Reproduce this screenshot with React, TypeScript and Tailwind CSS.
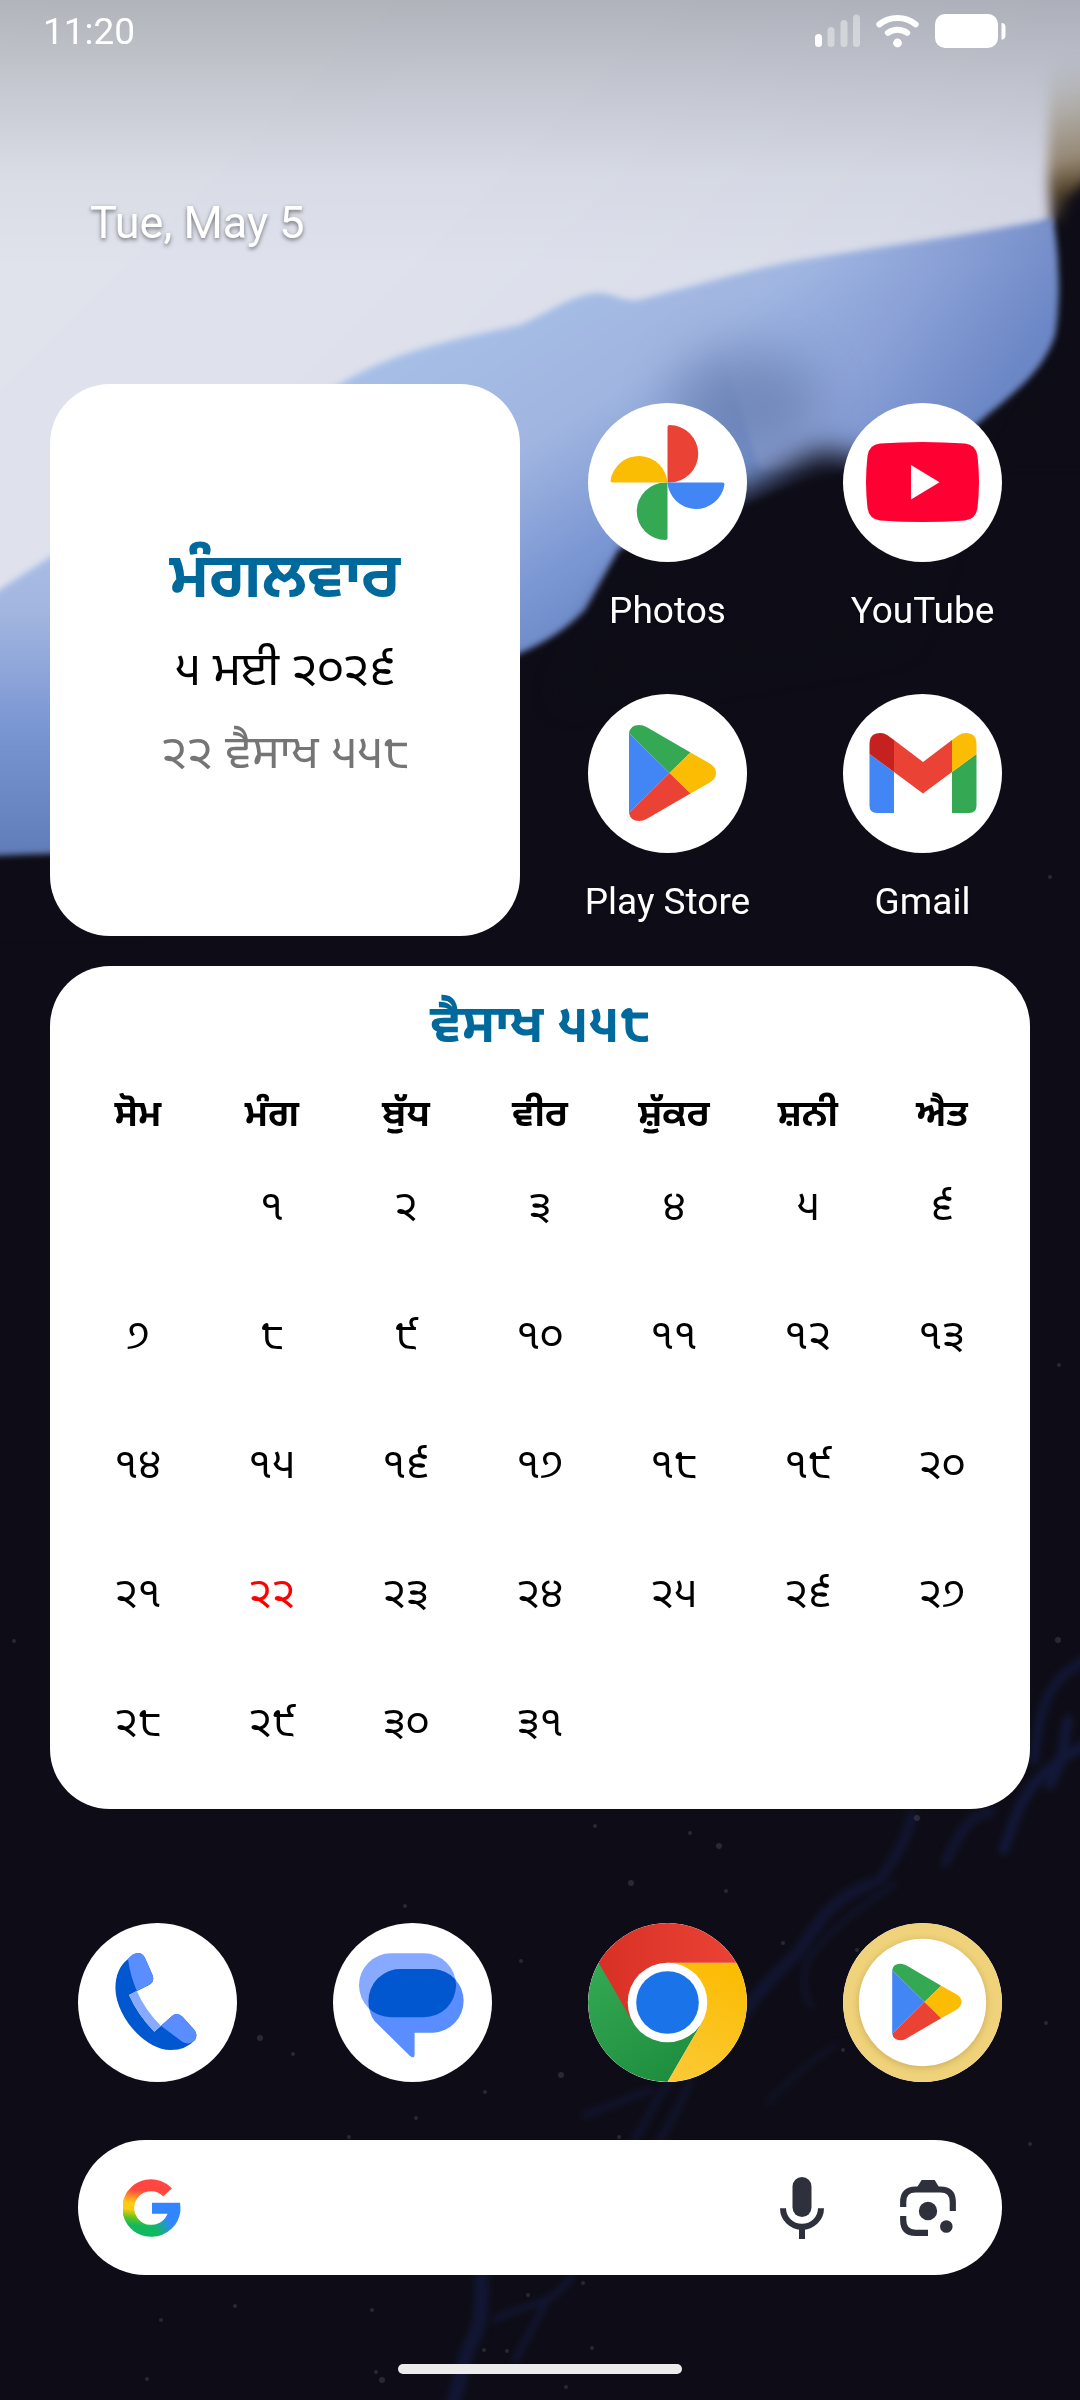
import React from 'react';

const weekdays = ['ਸੋਮ', 'ਮੰਗ', 'ਬੁੱਧ', 'ਵੀਰ', 'ਸ਼ੁੱਕਰ', 'ਸ਼ਨੀ', 'ਐਤ'];

const weeks = [
  ['', '੧', '੨', '੩', '੪', '੫', '੬'],
  ['੭', '੮', '੯', '੧੦', '੧੧', '੧੨', '੧੩'],
  ['੧੪', '੧੫', '੧੬', '੧੭', '੧੮', '੧੯', '੨੦'],
  ['੨੧', '੨੨', '੨੩', '੨੪', '੨੫', '੨੬', '੨੭'],
  ['੨੮', '੨੯', '੩੦', '੩੧', '', '', ''],
];

const today = '੨੨';

// [x, y, radius]
const stars = [
  [1058, 1640, 3], [917, 1818, 3], [595, 1826, 2], [719, 1846, 3], [690, 1833, 2], [631, 1883, 3],
  [726, 1891, 2], [783, 1943, 2], [857, 1950, 2], [843, 2050, 2], [561, 2075, 3], [260, 2038, 3],
  [293, 2054, 2], [405, 1906, 2], [521, 1961, 2], [485, 2092, 2], [349, 2137, 2], [416, 2118, 2],
  [619, 2137, 2], [583, 2283, 2], [528, 2295, 2], [235, 2306, 2], [161, 2320, 2], [484, 2350, 2],
  [507, 2351, 2], [376, 2372, 2], [382, 2380, 3], [147, 2379, 2], [592, 2348, 2], [1046, 2023, 2],
  [1059, 1365, 2], [1050, 877, 2], [566, 2387, 2], [1030, 2144, 2], [372, 2310, 2], [14, 1641, 2],
];

const Wallpaper: React.FC = () => (
  <svg className="absolute inset-0 h-full w-full" viewBox="0 0 1080 2400" preserveAspectRatio="none" colorInterpolationFilters="sRGB" aria-hidden="true">
    <defs>
      <linearGradient id="paper" x1="0" y1="0" x2="1" y2="0.6">
        <stop offset="0" stopColor="#e1e4ec" />
        <stop offset="0.45" stopColor="#dfe2ed" />
        <stop offset="0.75" stopColor="#dadeea" />
        <stop offset="1" stopColor="#d3d2e2" />
      </linearGradient>
      <linearGradient id="petal" gradientUnits="userSpaceOnUse" x1="420" y1="300" x2="640" y2="640">
        <stop offset="0" stopColor="#a8c1e8" />
        <stop offset="0.45" stopColor="#a0b5e0" />
        <stop offset="0.75" stopColor="#7a96d3" />
        <stop offset="1" stopColor="#6581bf" />
      </linearGradient>
      <linearGradient id="petalRight" gradientUnits="userSpaceOnUse" x1="760" y1="260" x2="980" y2="420">
        <stop offset="0" stopColor="#a4bbe6" stopOpacity="0" />
        <stop offset="0.5" stopColor="#8da3d8" />
        <stop offset="1" stopColor="#6c87c6" />
      </linearGradient>
      <linearGradient id="petalLeft" x1="0" y1="0" x2="0" y2="1">
        <stop offset="0" stopColor="#abc0e6" />
        <stop offset="0.3" stopColor="#a3b6e0" />
        <stop offset="0.65" stopColor="#7895d2" />
        <stop offset="1" stopColor="#607cb9" />
      </linearGradient>
      <linearGradient id="edge" gradientUnits="userSpaceOnUse" x1="1050" y1="60" x2="1080" y2="225">
        <stop offset="0" stopColor="#cfcfd4" stopOpacity="0" />
        <stop offset="0.3" stopColor="#c2bfba" />
        <stop offset="0.6" stopColor="#9d8f7a" />
        <stop offset="0.78" stopColor="#57472f" />
        <stop offset="1" stopColor="#0e0d17" />
      </linearGradient>
      <linearGradient id="scrim" x1="0" y1="0" x2="0" y2="1">
        <stop offset="0" stopColor="#000" stopOpacity="0.21" />
        <stop offset="0.35" stopColor="#000" stopOpacity="0.11" />
        <stop offset="0.65" stopColor="#000" stopOpacity="0.03" />
        <stop offset="1" stopColor="#000" stopOpacity="0" />
      </linearGradient>
      <filter id="blur3" x="-20%" y="-20%" width="140%" height="140%"><feGaussianBlur stdDeviation="3" /></filter>
      <filter id="blur6" x="-50%" y="-50%" width="200%" height="200%"><feGaussianBlur stdDeviation="6" /></filter>
      <filter id="blur14" x="-50%" y="-50%" width="200%" height="200%"><feGaussianBlur stdDeviation="14" /></filter>
      <filter id="blur26" x="-100%" y="-100%" width="300%" height="300%"><feGaussianBlur stdDeviation="26" /></filter>
    </defs>

    <rect width="1080" height="2400" fill="#0e0d17" />

    <g filter="url(#blur3)">
      <path d="M-20 -20H1100V190L1053 222L900 300L600 400L300 600L-20 640Z" fill="url(#paper)" />
    </g>
    <path d="M1050 60H1110V430H1062C1056 330 1056 260 1048 180Z" fill="url(#edge)" filter="url(#blur6)" />
    <path d="M1066 200L1100 170V460H1000L1056 360Z" fill="#0e0d17" filter="url(#blur6)" />

    <g filter="url(#blur3)">
      <path d="M-20 602C20 578 60 548 140 505C220 455 290 412 340 384C390 352 460 338 520 325C550 312 570 296 596 293C612 292 622 302 638 300C700 285 740 272 790 262C880 246 970 236 1053 218C1060 260 1060 310 1055 335C1042 375 1010 395 972 428C900 470 820 470 760 500L619 549L585 610C560 635 540 645 500 662L400 740L200 830C120 856 60 852 -20 856Z" fill="url(#petal)" />
      <path d="M700 281C820 255 940 242 1053 218C1060 260 1060 310 1055 335C1042 375 1010 395 972 428C900 470 820 470 760 470Z" fill="url(#petalRight)" />
      <path d="M-20 602C20 578 60 548 140 505V840C80 856 40 850 -20 856Z" fill="url(#petalLeft)" />
    </g>

    <ellipse cx="745" cy="405" rx="75" ry="55" fill="#4c5f8e" opacity="0.4" filter="url(#blur26)" />
    <path d="M625 580L700 510L760 482L820 450L860 458L960 480L900 640L560 700L590 640Z" fill="#0e0d17" filter="url(#blur14)" />
    <path d="M-20 872C40 864 80 866 140 852V930H-20Z" fill="#0e0d17" filter="url(#blur6)" />

    <g fill="none" stroke="#16204f" strokeLinecap="round" filter="url(#blur3)">
      <path d="M1085 1660C1050 1680 1040 1700 1034 1760" strokeWidth="10" opacity="0.5" />
      <path d="M1068 1720C1062 1750 1064 1760 1050 1785M1085 1745C1030 1775 1020 1800 1004 1850" strokeWidth="10" opacity="0.6" />
      <path d="M990 1812C960 1818 955 1850 945 1862M912 1816C906 1840 900 1850 880 1880" strokeWidth="10" opacity="0.45" />
      <path d="M870 1884C830 1900 820 1920 800 1950C780 1972 755 1990 735 2030" strokeWidth="12" opacity="0.45" />
      <path d="M895 1884C855 1910 830 1930 808 1960C800 1985 805 2000 812 2006" strokeWidth="4" opacity="0.5" />
      <path d="M835 2045C810 2062 795 2075 768 2102" strokeWidth="4" opacity="0.4" />
      <path d="M670 2080C650 2110 640 2130 630 2150M690 2080C680 2110 665 2130 655 2150M650 2090L585 2115" strokeWidth="6" opacity="0.45" />
      <path d="M482 2270C480 2300 485 2320 470 2345C460 2370 460 2390 450 2410" strokeWidth="14" opacity="0.5" />
      <path d="M572 2275C550 2310 530 2300 495 2320M545 2305L515 2360" strokeWidth="5" opacity="0.6" />
    </g>

    <g fill="#8d8d9a" opacity="0.22">
      {stars.map(([x, y, r]) => (
        <circle key={`${x}-${y}`} cx={x} cy={y} r={r} />
      ))}
    </g>
    <rect width="1080" height="270" fill="url(#scrim)" />
  </svg>
);

const StatusBar: React.FC = () => (
  <header className="flex h-[62px] items-center justify-between pr-[74px] pl-[43px]">
    <span className="text-[37px] leading-none">11:20</span>
    <div className="flex items-center gap-4">
      <svg width="45" height="34" viewBox="0 0 45 34" fill="#fff" aria-hidden="true">
        <rect x="0" y="20" width="7" height="13" rx="3.5" />
        <rect x="12.5" y="13" width="7" height="20" rx="3.5" opacity="0.4" />
        <rect x="25.5" y="6" width="7" height="27" rx="3.5" opacity="0.4" />
        <rect x="38" y="0.5" width="7" height="32.5" rx="3.5" opacity="0.4" />
      </svg>
      <svg width="43" height="34" viewBox="0 0 43 34" fill="none" stroke="#fff" strokeLinecap="round" aria-hidden="true">
        <path d="M3.3 10.4C13.5 1.8 29.5 1.8 39.7 10.4" strokeWidth="6" />
        <path d="M11.8 18.8C17.5 14.6 25.5 14.6 31.2 18.8" strokeWidth="6" />
        <circle cx="21.5" cy="29" r="4.4" fill="#fff" stroke="none" />
      </svg>
      <svg width="71" height="34" viewBox="0 0 71 34" fill="#fff" aria-hidden="true">
        <rect width="63" height="34" rx="10" />
        <path d="M66.500 9C69.500 9 70.500 11 70.500 13V21C70.500 23.500 69.500 25.500 66.500 25.500Z" />
      </svg>
    </div>
  </header>
);

const PhotosIcon = () => (
  <svg viewBox="0 0 159 159" aria-hidden="true">
    <path d="M79.500 79.500V24Q79.500 22 81.500 22A28.700 28.700 0 0 1 81.500 79.500Z" fill="#ea4335" />
    <path d="M79.500 79.500H134.500Q136.500 79.500 136.500 81.500A28.700 28.700 0 0 1 79.500 79.500Z" fill="#4285f4" />
    <path d="M79.500 79.500V135Q79.500 137 77.500 137A28.700 28.700 0 0 1 77.500 79.500Z" fill="#34a853" />
    <path d="M79.500 79.500H24.500Q22.500 79.500 22.500 77.500A28.700 28.700 0 0 1 79.500 79.500Z" fill="#fbbc04" />
  </svg>
);

const YouTubeIcon = () => (
  <svg viewBox="0 0 159 159" aria-hidden="true">
    <path d="M37 40.500Q79.500 37.500 122 40.500Q133 41.500 134.500 53Q137.500 79 134.500 105Q133 116 122 117.500Q79.500 120.500 37 117.500Q26 116 24.500 105Q21.500 79 24.500 53Q26 41.500 37 40.500Z" fill="#ff0033" />
    <path d="M68 62L96.500 79.200L68 96.500Z" fill="#fff" />
  </svg>
);

const PlayShape = () => (
  <>
    <path d="M41 39V119L81.500 79Z" fill="#4285f4" />
    <path d="M41 39Q42.500 31 51 31Q55 31 58.500 33L102.500 58.600L81.500 79Z" fill="#34a853" />
    <path d="M102.500 58.600L121 69Q128 73 128 79Q128 85 121 89L102.500 99.500L81.500 79Z" fill="#fbbc04" />
    <path d="M41 119Q42.500 127 51 127Q55 127 58.500 125L102.500 99.500L81.500 79Z" fill="#ea4335" />
  </>
);

const PlayIcon = () => (
  <svg viewBox="0 0 159 159" aria-hidden="true">
    <PlayShape />
  </svg>
);

const GmailIcon = () => (
  <svg viewBox="0 0 159 159" aria-hidden="true">
    <path d="M26.500 60L51 78V119H34Q26.500 119 26.500 111.500Z" fill="#4285f4" />
    <path d="M133.500 60L109 78V119H126Q133.500 119 133.500 111.500Z" fill="#34a853" />
    <path d="M51 46L80 68L109 46V78L80 99.500L51 78Z" fill="#ea4335" />
    <path d="M26.500 60V50Q26.500 39 37.500 39Q41 39 44.500 41.200L51 46V78Z" fill="#c5221f" />
    <path d="M133.500 60V50Q133.500 39 122.500 39Q119 39 115.500 41.200L109 46V78Z" fill="#fbbc04" />
  </svg>
);

const PhoneIcon = () => (
  <svg viewBox="0 0 159 159" aria-hidden="true">
    <path d="M60 30Q64.500 30 67 35L74.500 52Q77 59 71 62L51 72Q60 92 76.300 108.700L94 93Q99 88.500 104.500 93.700L116.500 107Q120 112 117 117Q108 127 92.500 127C66 127 37.400 92 37.400 65Q37.400 46 50 36Q55 30 60 30Z" fill="#0057cf" />
    <path d="M50 36Q55 30 60 30Q64.500 30 67 35L74.500 52Q77 59 71 62L58.700 67.700Q52 52 50 36Z" fill="#5a8dff" />
    <path d="M82.800 102.700L94 93Q99 88.500 104.500 93.700L116.500 107Q120 112 117 117Q111 123 104 118.500Z" fill="#5a8dff" />
    <path d="M58.700 67.700L51 72Q60 92 76.300 108.700L82.800 102.700Q67 87 58.700 67.700Z" fill="#87a9ff" />
  </svg>
);

const MessagesIcon = () => (
  <svg viewBox="0 0 159 159" aria-hidden="true">
    <defs>
      <clipPath id="frontBubble"><rect x="26" y="30.300" width="97" height="64" rx="32" /></clipPath>
    </defs>
    <rect x="26" y="30.300" width="97" height="64" rx="32" fill="#87a9ff" />
    <path d="M67.500 46H100.500A31.900 31.900 0 0 1 100.500 109.700H81.600V131.500Q81.600 136 77 133L41.500 98Q35.500 90 35.500 78A32 32 0 0 1 67.500 46Z" fill="#5a8dff" />
    <path d="M67.500 46H100.500A31.900 31.900 0 0 1 100.500 109.700H50L41.500 98Q35.500 90 35.500 78A32 32 0 0 1 67.500 46Z" fill="#0057cf" clipPath="url(#frontBubble)" />
  </svg>
);

const ChromeIcon = () => (
  <svg viewBox="0 0 159 159" aria-hidden="true">
    <defs>
      <linearGradient id="chromeRed" x1="0" x2="1"><stop offset="0" stopColor="#d93025" /><stop offset="1" stopColor="#ea4335" /></linearGradient>
      <linearGradient id="chromeYellow" x1="0.3" y1="1" x2="0.6" y2="0"><stop offset="0" stopColor="#fcc934" /><stop offset="1" stopColor="#fbbc04" /></linearGradient>
      <linearGradient id="chromeGreen" x1="0.7" y1="1" x2="0.1" y2="0"><stop offset="0" stopColor="#1e8e3e" /><stop offset="1" stopColor="#34a853" /></linearGradient>
    </defs>
    <path d="M79.500 159A79.500 79.500 0 0 1 10.700 39.700L79.500 79.500L114 99.400Z" fill="url(#chromeGreen)" />
    <path d="M148.300 39.700A79.500 79.500 0 0 1 79.500 159L114 99.400L79.500 39.700Z" fill="url(#chromeYellow)" />
    <path d="M10.700 39.700A79.500 79.500 0 0 1 148.300 39.700H79.500L45 99.400Z" fill="url(#chromeRed)" />
    <circle cx="79.500" cy="79.500" r="39.800" fill="#fff" />
    <circle cx="79.500" cy="79.500" r="31.300" fill="#1a73e8" />
  </svg>
);

const SuggestedPlayIcon = () => (
  <svg viewBox="0 0 159 159" aria-hidden="true">
    <defs>
      <filter id="soft"><feGaussianBlur stdDeviation="3" /></filter>
    </defs>
    <circle cx="79.500" cy="79.500" r="79.500" fill="#efd27a" />
    <circle cx="79.500" cy="81" r="64.500" fill="#8a6d20" opacity="0.3" filter="url(#soft)" />
    <circle cx="79.500" cy="79.500" r="63.700" fill="#fff" />
    <g transform="translate(16.500 16) scale(0.797)">
      <PlayShape />
    </g>
  </svg>
);

const GoogleIcon = () => (
  <svg width="58" height="58" viewBox="0 0 58 58" fill="none" aria-hidden="true">
    <defs>
      <linearGradient id="gLeft" gradientUnits="userSpaceOnUse" x1="34" y1="6" x2="28" y2="54">
        <stop offset="0.15" stopColor="#ff4641" />
        <stop offset="0.42" stopColor="#ffc814" />
        <stop offset="0.56" stopColor="#fbcc0e" />
        <stop offset="0.74" stopColor="#5fc321" />
        <stop offset="0.88" stopColor="#10b95f" />
      </linearGradient>
      <linearGradient id="gRight" gradientUnits="userSpaceOnUse" x1="29" y1="52" x2="50" y2="38">
        <stop offset="0.15" stopColor="#10b95f" />
        <stop offset="0.8" stopColor="#3186ff" />
      </linearGradient>
    </defs>
    <path d="M44.600 13.400A22.800 22.800 0 1 0 29.500 51.800" stroke="url(#gLeft)" strokeWidth="12" />
    <path d="M29 51.800A22.800 22.800 0 0 0 51.400 31" stroke="url(#gRight)" strokeWidth="12" />
    <path d="M29 23.700H57Q58 29 57 34.800H29Z" fill="#3186ff" />
  </svg>
);

const MicIcon = () => (
  <svg width="44" height="62" viewBox="0 0 44 62" fill="none" stroke="#2e313b" strokeWidth="6" aria-hidden="true">
    <rect x="12.500" y="0" width="19" height="40" rx="9.500" fill="#2e313b" stroke="none" />
    <path d="M3 31.300A19 18.500 0 0 0 41 31.300" />
    <path d="M22 50V62" />
  </svg>
);

const LensIcon = () => (
  <svg width="56" height="56" viewBox="0 0 56 56" fill="none" stroke="#2e313b" strokeWidth="6.200" aria-hidden="true">
    <path d="M3.200 27V22Q3.200 9.500 15.500 9.500H40.500Q52.800 9.500 52.800 22V31" />
    <path d="M3.200 36V40Q3.200 52.800 15.500 52.800H28" />
    <path d="M16.500 8L21.700 0H34.700L39.500 8Z" fill="#2e313b" stroke="none" />
    <circle cx="28" cy="31" r="9.200" fill="#2e313b" stroke="none" />
    <circle cx="46.300" cy="46.500" r="6.300" fill="#2e313b" stroke="none" />
  </svg>
);

const AppIcon: React.FC<{ label?: string; name?: string; children: React.ReactNode }> = ({ label, name, children }) => (
  <button type="button" aria-label={name} className="flex flex-col items-center">
    <span className="block size-[159px] overflow-hidden rounded-full bg-white">{children}</span>
    {label && <span className="mt-[25px] text-[37px] leading-[48px] whitespace-nowrap text-shadow-[0_1px_3px_rgb(0_0_0/0.4)]">{label}</span>}
  </button>
);

const DateWidget: React.FC = () => (
  <section className="mx-5 flex h-[552px] flex-col items-center justify-center rounded-[60px] bg-white pt-[10px] font-['Noto_Sans_Gurmukhi','Noto_Sans',sans-serif]">
    <h1 className="text-[63px] leading-[100px] font-bold text-[#00699c]">ਮੰਗਲਵਾਰ</h1>
    <p className="text-[47px] leading-[83px] text-black">੫ ਮਈ ੨੦੨੬</p>
    <p className="text-[47px] leading-[83px] text-[#757575]">੨੨ ਵੈਸਾਖ ੫੫੮</p>
  </section>
);

const CalendarWidget: React.FC = () => (
  <section className="mx-[50px] mt-[30px] rounded-[60px] bg-white px-[21px] pt-6 font-['Noto_Sans_Gurmukhi','Noto_Sans',sans-serif] text-black">
    <table className="w-full table-fixed text-center">
      <caption className="h-20 text-[53px] leading-[80px] font-bold text-[#00699c]">ਵੈਸਾਖ ੫੫੮</caption>
      <thead>
        <tr className="h-[94px]">
          {weekdays.map((day) => (
            <th key={day} scope="col" className="p-0 text-[37px] leading-[56px] font-bold">{day}</th>
          ))}
        </tr>
      </thead>
      <tbody>
        {weeks.map((week, i) => (
          <tr key={i} className="h-[129px]">
            {week.map((day, j) => (
              <td key={j} className={`p-0 pt-[14px] align-top text-[42px] leading-[64px] ${day === today ? 'text-[#ff0000]' : ''}`}>{day}</td>
            ))}
          </tr>
        ))}
      </tbody>
    </table>
  </section>
);

const SearchBar: React.FC = () => (
  <form className="mx-[78px] mt-[58px] flex h-[135px] items-center rounded-full bg-white pr-[46px] pl-[45px]" onSubmit={(e) => e.preventDefault()}>
    <GoogleIcon />
    <input type="text" aria-label="Google" className="min-w-0 flex-1 px-6 text-[37px] text-black outline-none" />
    <button type="button" aria-label="Voice" className="mr-[76px]"><MicIcon /></button>
    <button type="button" aria-label="Lens"><LensIcon /></button>
  </form>
);

export default function App() {
  return (
    <div className="relative min-h-screen overflow-hidden bg-[#0e0d17] font-[Roboto,sans-serif] text-white">
      <Wallpaper />
      <main className="relative flex min-h-screen flex-col">
        <StatusBar />
        <p className="my-[131px] px-[90px] text-[45px] leading-[60px] text-shadow-[0_2px_4px_rgb(0_0_0/0.5)]">Tue, May 5</p>

        <div className="grid grid-cols-2 px-[30px]">
          <DateWidget />
          <div className="grid grid-cols-2 content-start gap-y-[59px] pt-[19px]">
            <AppIcon label="Photos"><PhotosIcon /></AppIcon>
            <AppIcon label="YouTube"><YouTubeIcon /></AppIcon>
            <AppIcon label="Play Store"><PlayIcon /></AppIcon>
            <AppIcon label="Gmail"><GmailIcon /></AppIcon>
          </div>
        </div>

        <CalendarWidget />

        <nav className="mt-[114px] grid grid-cols-4 px-[30px]">
          <AppIcon name="Phone"><PhoneIcon /></AppIcon>
          <AppIcon name="Messages"><MessagesIcon /></AppIcon>
          <AppIcon name="Chrome"><ChromeIcon /></AppIcon>
          <AppIcon name="Play Store"><SuggestedPlayIcon /></AppIcon>
        </nav>

        <SearchBar />

        <div className="mx-auto mt-auto mb-[26px] h-[10px] w-[284px] rounded-full bg-[#ececed]" />
      </main>
    </div>
  );
}
